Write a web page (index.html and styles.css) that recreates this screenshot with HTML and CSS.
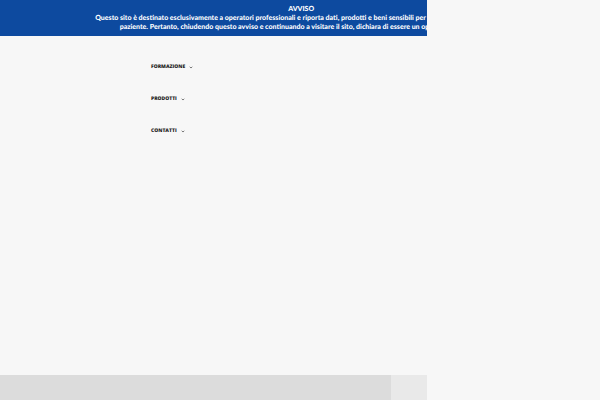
FILE: index.html
```html
<!DOCTYPE html>
<html lang="it">
<head>
<meta charset="utf-8">
<title>Avviso</title>
<link rel="stylesheet" href="styles.css">
</head>
<body>
<div class="page">
  <aside class="notice">
    <div class="notice-text">
      <strong>AVVISO</strong>
      <p>Questo sito è destinato esclusivamente a operatori professionali e riporta dati, prodotti e beni sensibili per la salute e la sicurezza del</p>
      <p>paziente. Pertanto, chiudendo questo avviso e continuando a visitare il sito, dichiara di essere un operatore sanitario.</p>
    </div>
  </aside>
  <nav class="menu">
    <a href="#catalogo">CATALOGO</a>
    <a href="#formazione">FORMAZIONE <svg class="caret" viewBox="0 0 4 3"><path d="M.7 .8l1.3 1.2 1.3-1.2"/></svg></a>
    <a href="#prodotti">PRODOTTI <svg class="caret" viewBox="0 0 4 3"><path d="M.7 .8l1.3 1.2 1.3-1.2"/></svg></a>
    <a href="#contatti">CONTATTI <svg class="caret" viewBox="0 0 4 3"><path d="M.7 .8l1.3 1.2 1.3-1.2"/></svg></a>
  </nav>
  <div class="strip"><div class="strip-main"></div></div>
</div>
</body>
</html>
```

FILE: styles.css
```css
* { box-sizing: border-box; }
body {
  margin: 0;
  background: #f7f7f7;
  font-family: Lato, "Open Sans", "Noto Sans", sans-serif;
  text-rendering: geometricPrecision;
}
.page {
  position: relative;
  display: flex;
  flex-direction: column;
  width: 71.2%;
  min-height: 100vh;
  overflow: hidden;
}
.notice {
  position: absolute;
  top: 0;
  left: 0;
  right: 0;
  padding: 5px 0 4px;
  overflow: hidden;
  background: #0d4a9f;
  color: #fff;
  font-size: 7px;
  font-weight: 900;
  line-height: 9px;
  text-align: center;
  white-space: nowrap;
}
.notice-text { width: 141%; }
.notice strong { display: block; font-weight: 900; }
.notice p { margin: 0; }
.menu {
  display: flex;
  flex-direction: column;
  align-items: flex-start;
  flex: 1;
  padding: 19px 0 0 151px;
}
.menu a {
  display: flex;
  align-items: center;
  gap: 4px;
  height: 32px;
  color: #222;
  font-family: "Open Sans", "Noto Sans", sans-serif;
  font-size: 5px;
  font-weight: 800;
  text-decoration: none;
}
.caret {
  width: 4px;
  height: 3px;
  fill: none;
  stroke: #777;
}
.strip {
  height: 25px;
  background: #e9e9e9;
}
.strip-main {
  width: 91.5%;
  height: 100%;
  background: #dcdcdc;
}
```
